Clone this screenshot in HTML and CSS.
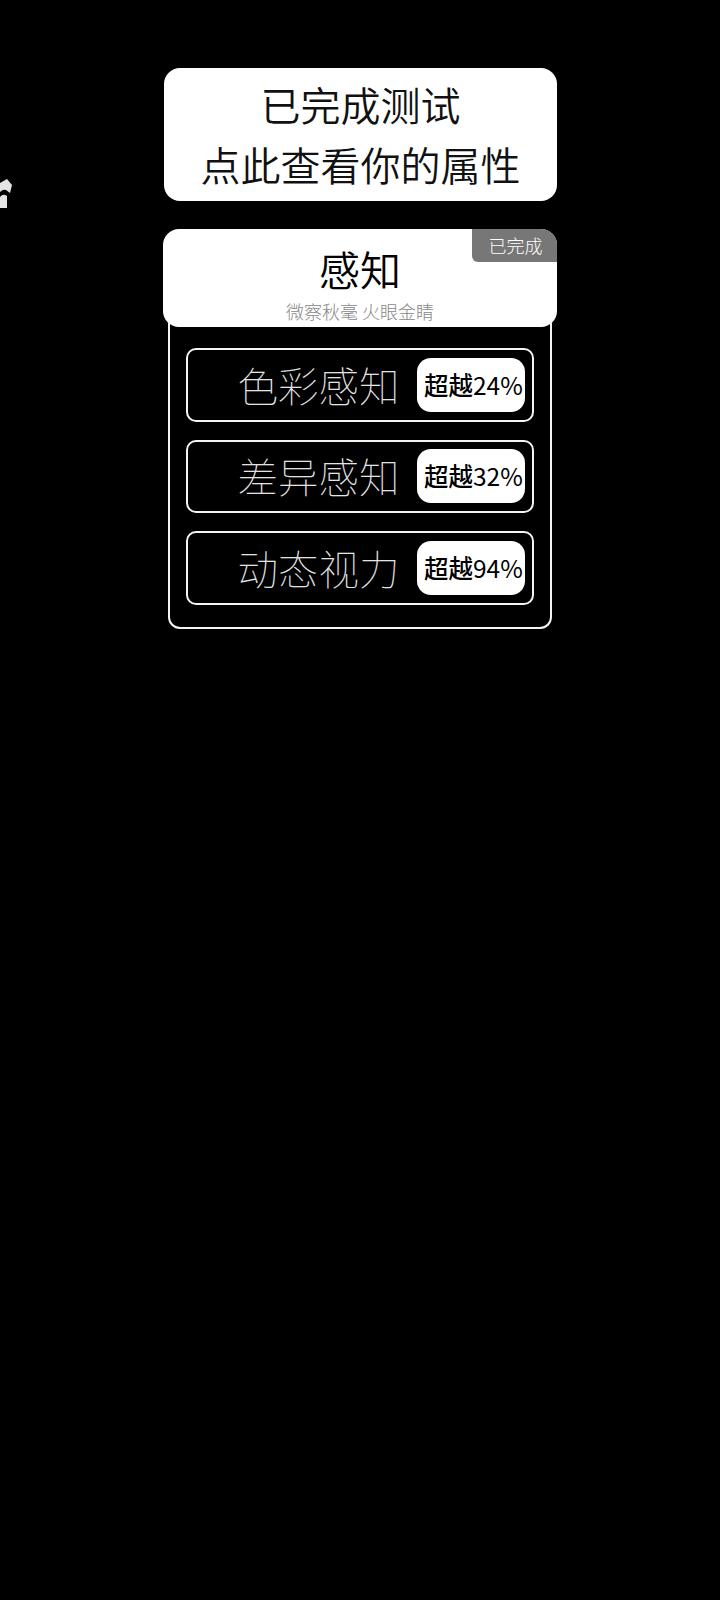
FILE: index.html
```html
<!DOCTYPE html>
<html lang="zh-CN">
<head>
<meta charset="utf-8">
<title>测试结果</title>
<link rel="stylesheet" href="styles.css">
</head>
<body>
<svg class="corner-icon" width="13" height="32" viewBox="0 0 13 32"><path d="M0 5 L7 1 L12 7 L10 15 L6 12 Q3 11 0 14 Z" fill="#e4e4e4"/><path d="M0 19 Q3 15 7 18 L7 30 L0 30 Z" fill="#e4e4e4"/></svg>
<main class="page">
  <section class="done-card">已完成测试<br>点此查看你的属性</section>
  <section class="group">
    <header class="group-head">
      <span class="badge">已完成</span>
      <h1 class="group-title">感知</h1>
      <p class="group-sub">微察秋毫 火眼金睛</p>
    </header>
    <div class="panel">
      <div class="row"><span class="row-label">色彩感知</span><span class="chip"><span class="chip-lead">超越</span>24%</span></div>
      <div class="row"><span class="row-label">差异感知</span><span class="chip"><span class="chip-lead">超越</span>32%</span></div>
      <div class="row"><span class="row-label">动态视力</span><span class="chip"><span class="chip-lead">超越</span>94%</span></div>
    </div>
  </section>
</main>
</body>
</html>
```
FILE: styles.css
```css
html, body { margin: 0; padding: 0; background: #000; }
body { height: 1600px; overflow: hidden; position: relative; font-family: "Noto Sans CJK SC", "Noto Sans", sans-serif; }
.corner-icon { position: absolute; left: 0; top: 178px; }
.page { width: 394px; margin-left: 163px; padding-top: 68px; }
.done-card { box-sizing: border-box; width: 393px; height: 133px; margin-left: 1px; padding-top: 6px; background: #fff; border-radius: 16px; color: #111; font-size: 40px; font-weight: 350; line-height: 60px; text-align: center; }
.group { margin-top: 28px; }
.group-head { position: relative; box-sizing: border-box; height: 98px; padding-top: 15px; background: #fff; border-radius: 16px; overflow: hidden; text-align: center; }
.badge { position: absolute; right: 0; top: 0; width: 85px; height: 33px; padding-left: 2px; box-sizing: border-box; background: #777; color: #fff; font-size: 18px; line-height: 33px; border-bottom-left-radius: 6px; font-weight: 300; }
.group-title { margin: 0; color: #000; font-size: 41px; font-weight: 350; line-height: 48px; }
.group-sub { margin: 0; padding-top: 6px; color: #888; font-size: 18px; font-weight: 300; line-height: 26px; }
.panel { box-sizing: border-box; width: 384px; margin: -16px 0 0 5px; padding: 37px 16px 22px; border: 2px solid #f4f4f4; border-top: 0; border-radius: 12px; display: flex; flex-direction: column; gap: 18px; }
.row { box-sizing: border-box; height: 73.5px; border: 2px solid #f4f4f4; border-radius: 10px; display: flex; align-items: center; justify-content: flex-end; padding-right: 7px; gap: 17.5px; }
.row-label { color: #e4e4e4; font-size: 40.5px; font-weight: 100; line-height: 1; }
.chip { box-sizing: border-box; width: 108px; height: 54px; padding-left: 7px; background: #fff; border-radius: 14px; color: #000; font-size: 24.5px; font-weight: 400; line-height: 54px; white-space: nowrap; }
.chip-lead { font-weight: 500; }
```
